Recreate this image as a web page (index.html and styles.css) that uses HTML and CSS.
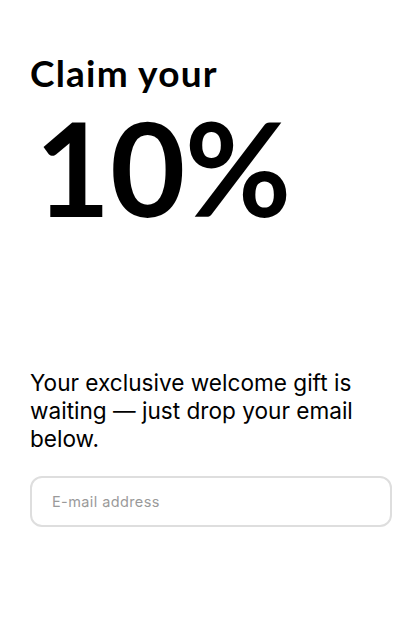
FILE: index.html
```html
<!DOCTYPE html>
<html>
<head>
<meta charset="utf-8">
<link rel="stylesheet" href="styles.css">
</head>
<body>
<main class="page">
  <h1 class="title">Claim your</h1>
  <div class="big">10%</div>
  <p class="lead">Your exclusive welcome gift is waiting — just drop your email below.</p>
  <input class="email" type="email" placeholder="E-mail address">
</main>
</body>
</html>
```
FILE: styles.css
```css
html, body { margin: 0; padding: 0; background: #fff; }
.page {
  padding: 45px 28px 0 30px;
  display: flex;
  flex-direction: column;
}
.title {
  margin: 0;
  font-family: "Lato", "Noto Sans", sans-serif;
  font-weight: 700;
  font-size: 37px;
  line-height: 56px;
  letter-spacing: 1.2px;
  color: #000;
}
.big {
  margin: -12px 0 0 5px;
  font-family: "Lato", "Noto Sans", sans-serif;
  font-weight: 700;
  font-size: 130px;
  line-height: 156px;
  letter-spacing: -0.5px;
  color: #000;
}
.lead {
  margin: 124px 0 0 0;
  font-family: "Inter", sans-serif;
  font-size: 22.6px;
  line-height: 28px;
  color: #000;
}
.email {
  margin-top: 23px;
  box-sizing: border-box;
  width: 100%;
  height: 51px;
  border: 2px solid #dedede;
  border-radius: 12px;
  padding: 0 20px;
  font-family: "Inter", sans-serif;
  font-size: 14.5px;
  letter-spacing: 0.4px;
  outline: none;
  background: #fff;
}
.email::placeholder { color: #9a9a9a; }
```
